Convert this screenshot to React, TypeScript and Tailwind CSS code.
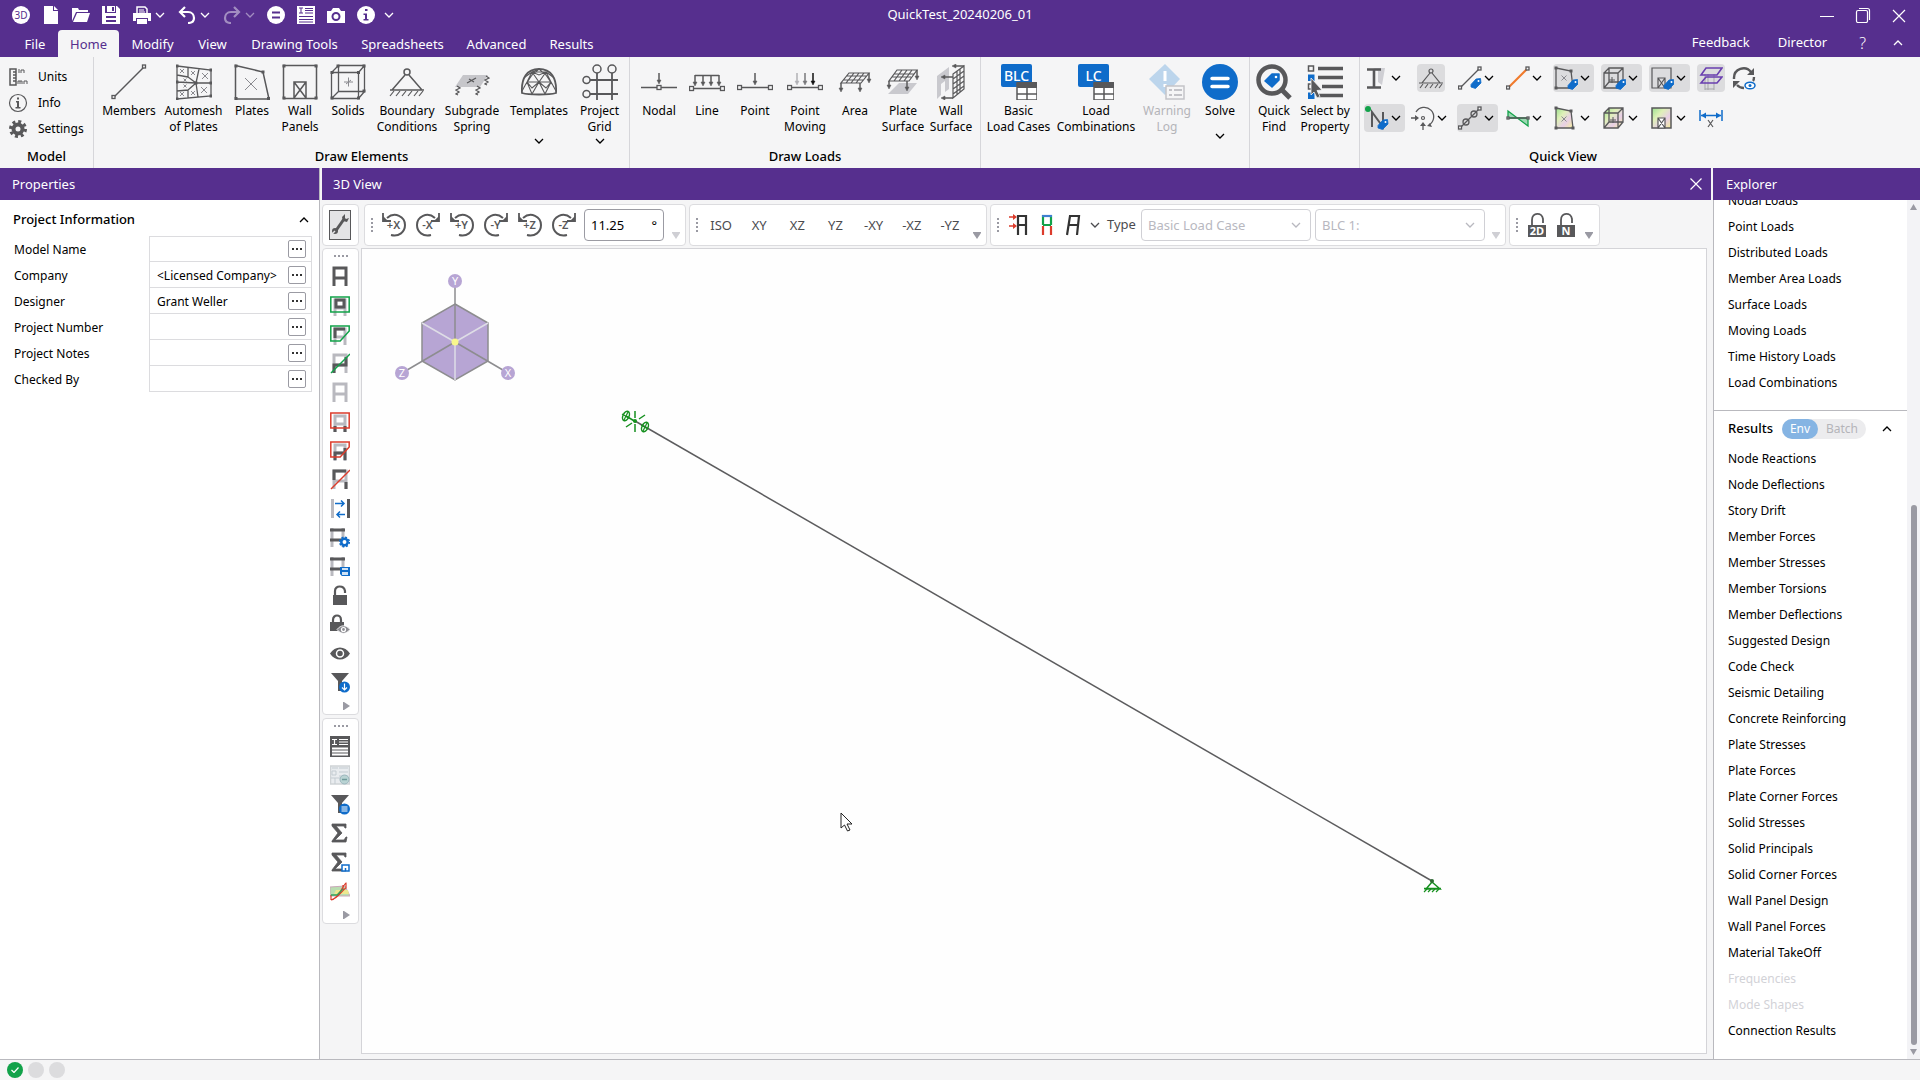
import type { ReactNode } from "react";
import clsx from "clsx";

const DARK = "#58585a";
const GRAY = "#b9b9bf";
const BLUE = "#0f6cca";
const GREEN = "#12a24a";
const RED = "#dc3c2c";
const PURPLE = "#562f8e";

type IconProps = { w?: number; h?: number; children: ReactNode; className?: string };

function Svg({ w = 36, h = 36, children, className }: IconProps) {
  return (
    <svg
      width={w}
      height={h}
      viewBox={`0 0 ${w} ${h}`}
      fill="none"
      stroke={DARK}
      strokeWidth="1.5"
      className={clsx("shrink-0", className)}
      aria-hidden="true"
    >
      {children}
    </svg>
  );
}

function Chevron({ up, className }: { up?: boolean; className?: string }) {
  return (
    <svg
      width="10"
      height="6"
      viewBox="0 0 10 6"
      fill="none"
      stroke="currentColor"
      strokeWidth="1.3"
      className={clsx("shrink-0", className)}
      aria-hidden="true"
    >
      <path d={up ? "M1 5 5 1l4 4" : "M1 1l4 4 4-4"} />
    </svg>
  );
}

/* ---------- quick access bar ---------- */

const quickIcons: { label: string; icon: ReactNode; menu?: boolean; off?: boolean }[] = [
  {
    label: "3D",
    icon: (
      <Svg w={18} h={18}>
        <circle cx="9" cy="9" r="9" fill="#fff" stroke="none" />
        <text x="9" y="12.5" fontSize="10" textAnchor="middle" fill={PURPLE} stroke="none">3D</text>
      </Svg>
    ),
  },
  {
    label: "New",
    icon: (
      <Svg w={14} h={18}>
        <path d="M0 0h9v5h5v13H0z" fill="#fff" stroke="none" />
        <path d="M10 0l4 4h-4z" fill="#fff" stroke="none" />
      </Svg>
    ),
  },
  {
    label: "Open",
    icon: (
      <Svg w={18} h={14}>
        <path d="M0 13V0h6l1 2h9v2H4z" fill="#fff" stroke="none" />
        <path d="M5 5h13l-3 9H1z" fill="#fff" stroke="none" />
      </Svg>
    ),
  },
  {
    label: "Save",
    icon: (
      <Svg w={18} h={18}>
        <path d="M0 0h3v7h11V0h1l3 3v15H0z" fill="#fff" stroke="none" />
        <path d="M5 0h8v6H5z" fill="#fff" stroke="none" />
        <path d="M10 1h2v4h-2zM4 10h10v6H4z" fill={PURPLE} stroke="none" />
        <path d="M4 12h10v2H4z" fill="#fff" stroke="none" />
      </Svg>
    ),
  },
  {
    label: "Print",
    menu: true,
    icon: (
      <Svg w={18} h={18}>
        <path d="M4 7V1h8l2 2v4" stroke="#fff" />
        <path d="M6 4h5M6 6h6" stroke="#fff" strokeWidth="1" />
        <path d="M0 7h18v8h-3v-3H3v3H0z" fill="#fff" stroke="none" />
        <path d="M4 13h10v5H4z" fill="#fff" stroke="none" />
      </Svg>
    ),
  },
  {
    label: "Undo",
    menu: true,
    icon: (
      <Svg w={18} h={18}>
        <path d="M2 6h8c4 0 6 3 6 6 0 3-2 5-6 5" stroke="#fff" strokeWidth="2.2" />
        <path d="M7 1 2 6l5 5" stroke="#fff" strokeWidth="2.2" />
      </Svg>
    ),
  },
  {
    label: "Redo",
    menu: true,
    off: true,
    icon: (
      <Svg w={18} h={18}>
        <path d="M16 6H8c-4 0-6 3-6 6 0 3 2 5 6 5" stroke="#fff" strokeWidth="2.2" />
        <path d="M11 1l5 5-5 5" stroke="#fff" strokeWidth="2.2" />
      </Svg>
    ),
  },
  {
    label: "Solve",
    icon: (
      <Svg w={18} h={18}>
        <circle cx="9" cy="9" r="9" fill="#fff" stroke="none" />
        <path d="M5 6.5h8M5 11.5h8" stroke={PURPLE} strokeWidth="2" />
      </Svg>
    ),
  },
  {
    label: "Spreadsheet",
    icon: (
      <Svg w={18} h={18}>
        <path d="M0 0h18v18H0z" fill="#fff" stroke="none" />
        <path d="M2 2h4M4 2v5M2 7h4M8 2.5h8M8 4.5h8M8 7h8M2 10.5h14M2 13.5h14M2 16h14" stroke={PURPLE} strokeWidth="1" />
      </Svg>
    ),
  },
  {
    label: "Snapshot",
    icon: (
      <Svg w={18} h={15}>
        <path d="M0 3h4l2-3h6l2 3h4v12H0z" fill="#fff" stroke="none" />
        <circle cx="9" cy="8.5" r="3.5" stroke={PURPLE} strokeWidth="2" />
      </Svg>
    ),
  },
  {
    label: "Information",
    icon: (
      <Svg w={18} h={18}>
        <circle cx="9" cy="9" r="9" fill="#fff" stroke="none" />
        <path d="M8 3h2.500v2H8zM6.500 7.500H10V13h1.500v1.500h-5V13H8V9H6.500z" fill={PURPLE} stroke="none" />
      </Svg>
    ),
  },
];

function TitleBar() {
  return (
    <div className="grid h-[30px] grid-cols-[1fr_auto_1fr] items-center">
      <div className="flex pl-1.5">
        {quickIcons.map((q) => (
          <button
            key={q.label}
            aria-label={q.label}
            disabled={q.off}
            className={clsx(
              "flex h-7 items-center",
              q.menu ? "w-[45px] gap-1 pl-[7px]" : "w-[30px] justify-center",
              q.off && "opacity-45"
            )}
          >
            {q.icon}
            {q.menu && <Chevron />}
          </button>
        ))}
        <button aria-label="Customize" className="flex h-7 w-4 items-center justify-center">
          <Chevron />
        </button>
      </div>
      <h1 className="text-[13px]">QuickTest_20240206_01</h1>
      <div className="flex items-center justify-end gap-[21px] pr-3.5">
        <button aria-label="Minimize">
          <Svg w={15} h={16}><path d="M1 9.500h14" stroke="#fff" strokeWidth="1" /></Svg>
        </button>
        <button aria-label="Restore">
          <Svg w={16} h={16}>
            <rect x="1.500" y="3.500" width="11" height="12" rx="1.500" stroke="#fff" strokeWidth="1.200" />
            <path d="M4 1.500h8.500a2 2 0 0 1 2 2V13" stroke="#fff" strokeWidth="1.200" />
          </Svg>
        </button>
        <button aria-label="Close">
          <Svg w={14} h={16}><path d="M1 3l12 12M13 3L1 15" stroke="#fff" strokeWidth="1.200" /></Svg>
        </button>
      </div>
    </div>
  );
}

const tabs = [
  { name: "File", width: "w-[46px]" },
  { name: "Home", width: "w-[61px]" },
  { name: "Modify", width: "w-[67px]" },
  { name: "View", width: "w-[53px]" },
  { name: "Drawing Tools", width: "w-[111px]" },
  { name: "Spreadsheets", width: "w-[105px]" },
  { name: "Advanced", width: "w-[83px]" },
  { name: "Results", width: "w-[67px]" },
];

function TabBar() {
  return (
    <nav className="flex h-[27px] items-end pl-3 text-[13px]">
      {tabs.map((t) => (
        <button
          key={t.name}
          className={clsx(
            "h-[27px] rounded-t pt-0.5 whitespace-nowrap",
            t.width,
            t.name === "Home" && "bg-[#f5f5f6] text-[#562f8e]"
          )}
        >
          {t.name}
        </button>
      ))}
      <div className="ml-auto flex h-7 items-center gap-7 pr-3.5">
        <button>Feedback</button>
        <button>Director</button>
        <div className="flex items-center gap-6 pl-1">
          <button aria-label="Help" className="text-base font-light">?</button>
          <button aria-label="Collapse ribbon" className="w-4"><Chevron up className="mx-auto" /></button>
        </div>
      </div>
    </nav>
  );
}

/* ---------- ribbon drawings ---------- */

const tag = (x: number, y: number) => (
  <g transform={`translate(${x} ${y})`}>
    <path d="M0 6.500 5 1l4.500-.5L10 5 4.500 10.500 0 9z" fill={BLUE} stroke={BLUE} strokeWidth=".8" strokeLinejoin="round" />
    <circle cx="7.500" cy="3" r="1" fill="#fff" stroke="none" />
  </g>
);

const nodeBox = (x: number, y: number, s = 4) => (
  <rect key={`${x}-${y}`} x={x - s / 2} y={y - s / 2} width={s} height={s} fill="#f5f5f6" strokeWidth="1.300" />
);

const dot = (x: number, y: number) => (
  <rect key={`${x}-${y}`} x={x - 1.5} y={y - 1.5} width="3" height="3" fill={DARK} stroke="none" />
);

const arrowDown = (x: number, y1: number, y2: number, color = DARK) => (
  <g key={x} stroke={color} fill={color}>
    <path d={`M${x} ${y1}V${y2 - 2}`} />
    <path d={`M${x - 2} ${y2 - 4}h4l-2 4z`} strokeWidth=".5" />
  </g>
);

const cross = (x: number, y: number, r: number) => (
  <path key={`${x}-${y}`} d={`M${x - r} ${y - r}l${2 * r} ${2 * r}M${x + r} ${y - r}l${-2 * r} ${2 * r}`} stroke="#8a8a8f" strokeWidth="1" />
);

const membersIcon = (
  <Svg>
    <path d="M3 33 33 3" />
    {nodeBox(2.5, 33, 3)}
    {nodeBox(33, 2.5, 3)}
  </Svg>
);

const meshIcon = (
  <Svg>
    <path d="M1 2l34 4v26L1 35zM1 18l19 1h15M20 19 23 5M20 19l2 14M20 19 12 13V3M20 19l-8 7v8M1 11l11 2M1 27l11-1" strokeWidth="1.300" />
    {[[1, 2], [35, 6], [35, 32], [1, 35], [1, 18], [20, 19], [35, 19]].map(([x, y]) => dot(x, y))}
    {[[6, 7, 2], [17, 9, 2], [29, 12, 3], [9, 16, 1.5], [9, 22, 1.5], [6, 30, 2], [17, 29, 2], [28, 26, 3]].map(([x, y, r]) => cross(x, y, r))}
  </Svg>
);

const platesIcon = (
  <Svg>
    <path d="M1.500 1.500 29 8l6 27H1.500z" />
    {dot(2, 2)}{dot(29, 8)}{dot(34.5, 34.5)}{dot(2, 34.5)}
    {cross(17, 20, 6)}
  </Svg>
);

const wallIcon = (
  <Svg>
    <path d="M1.500 1.500h33v33h-33zM12 34V18h12v16M12 18l12 16M24 18 12 34" />
    {dot(2, 2)}{dot(34, 2)}{dot(34, 34)}{dot(2, 34)}
  </Svg>
);

const solidsIcon = (
  <Svg>
    <path d="M1.500 8.500h27v26h-27zM8.500 1.500h26v26h-26zM1.500 8.500l7-7M28.500 8.500l6-7M28.500 34.500l6-7M1.500 34.500l7-7" strokeWidth="1.300" />
    {dot(2, 8.5)}{dot(28.5, 8.5)}{dot(28.5, 34)}{dot(2, 34)}{dot(8, 2)}{dot(34, 2)}{dot(34, 27)}
    <path d="M14 18h9M18.500 13.500v9M16 20l5-4" stroke="#8a8a8f" strokeWidth="1" />
  </Svg>
);

const boundaryIcon = (
  <Svg>
    <path d="M16 11 3 26h30L20 11M1 26h34" />
    <circle cx="18" cy="8" r="3" />
    <path d="M5 27l-4 5M11 27l-4 5M17 27l-4 5M23 27l-4 5M29 27l-4 5M34 27l-4 5" strokeWidth="1.200" />
  </Svg>
);

const subgradeIcon = (
  <Svg>
    <path d="M9 11h25l-8 12H1z" fill="#c6c6ca" stroke="none" />
    <path d="M13 19l9-5M15 15l5 3" strokeWidth="1.300" />
    <path d="M3 22l3 2-4 2 3 2-3 2 2 1M23 22l3 2-4 2 3 2-3 2 2 1M32 12l3 2-4 2 3 2-3 2 2 1" strokeWidth="1.300" />
  </Svg>
);

const domeIcon = (
  <Svg>
    <path d="M1 29C0 14 6 5 18 5s18 9 17 24c-7 2-27 2-34 0z" strokeWidth="1.800" />
    <path d="M1 27l5-9 5 12 7-12 6 12 6-12 5 9M6 18l5-10 7 10 7-10 5 10M11 8h14M18 5l-7 3 7 3 7-3M6 18h24M4 13l7-5M32 13l-7-5M3 23l8-12 7-6 7 6 8 12M6 18l5 6 7-6 7 6 5-6" strokeWidth="1.100" />
  </Svg>
);

const gridIcon = (
  <Svg>
    <path d="M8 16h28M8 30h28M15 9v27M30 9v27" strokeWidth="1.800" />
    <circle cx="15" cy="5" r="4" />
    <circle cx="30" cy="5" r="4" />
    <circle cx="4.500" cy="16" r="3.500" />
    <circle cx="4.500" cy="30" r="3.500" />
  </Svg>
);

const nodalIcon = (
  <Svg>
    <path d="M0 23.500h36" />
    {arrowDown(18, 9, 20)}
    {nodeBox(18, 23.5)}
  </Svg>
);

const lineIcon = (
  <Svg>
    <path d="M2 24.500h32M6 11.500h24" />
    {[6, 14, 22, 30].map((x) => arrowDown(x, 11, 22))}
    {nodeBox(2.5, 24.5)}{nodeBox(33.5, 24.5)}
  </Svg>
);

const pointIcon = (
  <Svg>
    <path d="M2 23.500h32" />
    {arrowDown(18, 9, 21)}
    {nodeBox(2.5, 23.5)}{nodeBox(33.5, 23.5)}
  </Svg>
);

const movingIcon = (
  <Svg>
    <path d="M2 23.500h32" />
    {arrowDown(10, 9, 21, "#b0b0b5")}
    {arrowDown(18, 9, 21, "#77777a")}
    {arrowDown(26, 9, 21, "#111")}
    {nodeBox(2.5, 23.5)}{nodeBox(33.5, 23.5)}
  </Svg>
);

const areaIcon = (
  <Svg>
    <path d="M12 9h20l-8 10H4zM17 9l-8 10M22 9l-8 10M27 9l-8 10M9 12h20M7 16h19" strokeWidth="1.200" />
    {arrowDown(4, 19, 28)}{arrowDown(23, 19, 28)}{arrowDown(32, 9, 19)}
  </Svg>
);

const plateSurfaceIcon = (
  <Svg>
    <path d="M14 19h18l-9 11H3z" fill="#c9c9ce" stroke="none" />
    <path d="M12 6h20l-8 11H4zM17 6 9 17M22 6l-8 11M27 6l-8 11M9 10h20M7 13h19" strokeWidth="1.200" />
    {arrowDown(4, 17, 25)}{arrowDown(22, 17, 27)}{arrowDown(32, 6, 16)}
  </Svg>
);

const wallSurfaceIcon = (
  <Svg>
    <path d="M4 12 16 3v22l-4 3V17l-4 3v11l-4 4z" fill="#c9c9ce" stroke="none" />
    <path d="M20 10 31 2v23l-11 9zM24 7v24M27 5v23M20 15l11-8M20 20l11-8M20 25l11-8M20 30l11-8" strokeWidth="1.200" />
    <path d="M31 2H22M20 13H11M20 34H11" />
    <path d="M23 0v4l-4-2zM12 11v4l-4-2zM12 32v4l-4-2z" fill={DARK} strokeWidth=".5" />
  </Svg>
);

const tableIcon = (text: string) => (
  <Svg>
    <rect x="0" y="0" width="31" height="23" rx="2" fill={BLUE} stroke="none" />
    <text x="15.500" y="17" fontSize="14" fontWeight="500" textAnchor="middle" fill="#fff" stroke="none">{text}</text>
    <path d="M16 19h20v17H16z" fill="#fff" />
    <path d="M16 18h20v6H16z" fill={DARK} stroke="none" />
    <path d="M16 30h20M26 24v12" />
  </Svg>
);

const warningIcon = (
  <Svg>
    <path d="M16 0 31 15 16 31 0 15z" fill="#bcd5ec" stroke="none" />
    <path d="M16 7v10M16 20v3" stroke="#fff" strokeWidth="3" />
    <rect x="17" y="22" width="18" height="13" fill="#f5f5f6" stroke="#c3c3c8" />
    <path d="M20 26h3M25 26h8M20 31h3M25 31h8" stroke="#c3c3c8" strokeWidth="2" />
  </Svg>
);

const solveIcon = (
  <Svg>
    <circle cx="18" cy="18" r="18" fill={BLUE} stroke="none" />
    <path d="M10 14.500h16M10 22.500h16" stroke="#fff" strokeWidth="3.500" strokeLinecap="round" />
  </Svg>
);

const findIcon = (
  <Svg>
    <circle cx="16" cy="16" r="13.500" strokeWidth="4.500" />
    <path d="M26 26l8 8" strokeWidth="5" />
    <path d="M9 17l7-7h7v6l-7 7z" fill={BLUE} stroke={BLUE} strokeLinejoin="round" />
    <circle cx="20" cy="13" r="1.300" fill="#fff" stroke="none" />
  </Svg>
);

const selectIcon = (
  <Svg>
    <path d="M11 4.500h25M11 13.500h25M15 22.500h21M11 31.500h25" strokeWidth="3.500" />
    <rect x="1.500" y="2" width="5" height="5" />
    <rect x="1" y="10.500" width="6.500" height="6.500" fill={BLUE} stroke="none" />
    <rect x="1.500" y="20" width="5" height="5" />
    <rect x="1" y="28.500" width="6.500" height="6.500" fill={BLUE} stroke="none" />
    <path d="M4 14l11 12-5 .5 3 6-3 1.500-3-6-3 3z" fill={DARK} stroke="#f5f5f6" strokeWidth=".8" />
  </Svg>
);

type Tool = { lines: string[]; icon: ReactNode; width: string; menu?: boolean; off?: boolean };

const elementTools: Tool[] = [
  { lines: ["Members"], icon: membersIcon, width: "w-14" },
  { lines: ["Automesh", "of Plates"], icon: meshIcon, width: "w-[73px]" },
  { lines: ["Plates"], icon: platesIcon, width: "w-11" },
  { lines: ["Wall", "Panels"], icon: wallIcon, width: "w-[52px]" },
  { lines: ["Solids"], icon: solidsIcon, width: "w-11" },
  { lines: ["Boundary", "Conditions"], icon: boundaryIcon, width: "w-[74px]" },
  { lines: ["Subgrade", "Spring"], icon: subgradeIcon, width: "w-14" },
  { lines: ["Templates", ""], icon: domeIcon, width: "w-[78px]", menu: true },
  { lines: ["Project", "Grid"], icon: gridIcon, width: "w-[43px]", menu: true },
];

const loadTools: Tool[] = [
  { lines: ["Nodal"], icon: nodalIcon, width: "w-12" },
  { lines: ["Line"], icon: lineIcon, width: "w-12" },
  { lines: ["Point"], icon: pointIcon, width: "w-12" },
  { lines: ["Point", "Moving"], icon: movingIcon, width: "w-[52px]" },
  { lines: ["Area"], icon: areaIcon, width: "w-12" },
  { lines: ["Plate", "Surface"], icon: plateSurfaceIcon, width: "w-12" },
  { lines: ["Wall", "Surface"], icon: wallSurfaceIcon, width: "w-12" },
];

const solveTools: Tool[] = [
  { lines: ["Basic", "Load Cases"], icon: tableIcon("BLC"), width: "w-[71px]" },
  { lines: ["Load", "Combinations"], icon: tableIcon("LC"), width: "w-[84px]" },
  { lines: ["Warning", "Log"], icon: warningIcon, width: "w-[58px]", off: true },
  { lines: ["Solve"], icon: solveIcon, width: "w-12", menu: true },
];

const findTools: Tool[] = [
  { lines: ["Quick", "Find"], icon: findIcon, width: "w-12" },
  { lines: ["Select by", "Property"], icon: selectIcon, width: "w-[54px]" },
];

function ToolButton({ tool }: { tool: Tool }) {
  return (
    <button
      disabled={tool.off}
      className={clsx(
        "flex h-20 shrink-0 flex-col items-center text-xs whitespace-nowrap",
        tool.width,
        tool.off && "text-[#b4b4b9]"
      )}
    >
      {tool.icon}
      <span className="mt-[3px] leading-4">
        {tool.lines.map((l) => (
          <span key={l} className="block min-h-4">{l}</span>
        ))}
      </span>
      {tool.menu && <Chevron className={tool.lines.length > 1 ? "mt-[3px]" : "mt-3.5"} />}
    </button>
  );
}

function RibbonGroup({ title, children, className, last }: { title?: string; children: ReactNode; className?: string; last?: boolean }) {
  return (
    <section className={clsx("flex shrink-0 flex-col pt-[7px]", !last && "border-r border-[#d6d6da]", className)}>
      <div className="flex h-20">{children}</div>
      {title && <h2 className="pt-0.5 text-center text-[13px] leading-5 font-medium">{title}</h2>}
    </section>
  );
}

/* ---------- quick view toggles ---------- */

const plateShape = "M2 2 17 5l2 17H2z";
const solidShape = "M2 7h14v15H2zM7 2h14v14H7zM2 7l5-5M16 7l5-5M16 22l5-6M2 22l5-6";

const viewToggles: { label: string; icon: ReactNode; on?: boolean; menu?: boolean }[] = [
  {
    label: "Member shape",
    menu: true,
    icon: (
      <Svg w={24} h={24}>
        <path d="M8 2h12l-3 17-4-3V5z" fill="#cfcfd4" stroke="none" />
        <path d="M2 3.500h14M9 3v18M2 21.500h14" strokeWidth="2.600" />
      </Svg>
    ),
  },
  {
    label: "Boundary conditions",
    on: true,
    icon: (
      <Svg w={24} h={24}>
        <path d="M11 7 3 17h18L13 7M0 17h24" strokeWidth="1.200" />
        <circle cx="12" cy="5" r="2" strokeWidth="1.200" />
        <path d="M4 18l-3 4M9 18l-3 4M14 18l-3 4M19 18l-3 4M23 18l-3 4" strokeWidth="1.100" />
      </Svg>
    ),
  },
  {
    label: "Member labels",
    menu: true,
    icon: (
      <Svg w={24} h={24}>
        <path d="M2 22 22 2" strokeWidth="1.200" />
        {nodeBox(2, 21.5, 3)}{nodeBox(21.5, 2.5, 3)}
        {tag(13, 12)}
      </Svg>
    ),
  },
  {
    label: "Member color",
    menu: true,
    icon: (
      <Svg w={24} h={24}>
        <path d="M2 22 22 2" stroke="#f07a2c" strokeWidth="2" />
        {nodeBox(2, 21.5, 3)}{nodeBox(21.5, 2.5, 3)}
      </Svg>
    ),
  },
  {
    label: "Plate labels",
    menu: true,
    on: true,
    icon: (
      <Svg w={24} h={24}>
        <path d={plateShape} strokeWidth="1.300" />
        {dot(2, 2)}{dot(17, 5)}{dot(2, 22)}
        {cross(10, 12, 2.5)}
        {tag(14, 13)}
      </Svg>
    ),
  },
  {
    label: "Solid labels",
    menu: true,
    on: true,
    icon: (
      <Svg w={24} h={24}>
        <path d={solidShape} strokeWidth="1.300" />
        <path d="M7 14h6M10 11v6" strokeWidth="1" />
        {tag(14, 13)}
      </Svg>
    ),
  },
  {
    label: "Wall labels",
    menu: true,
    on: true,
    icon: (
      <Svg w={24} h={24}>
        <path d="M2 2h19v20H2zM8 22V12h7v10M8 12l7 10M15 12 8 22" strokeWidth="1.200" />
        {tag(14, 13)}
      </Svg>
    ),
  },
  {
    label: "Story diaphragms",
    on: true,
    icon: (
      <Svg w={24} h={24}>
        <path d="M6 8v16M9 8v16M15 8v16M6 23h9" stroke="#a5a5aa" strokeWidth="1" />
        <path d="M7 2h16l-5 7H2zM7 11h16l-5 6H2z" stroke="#6a3fb0" strokeWidth="1.600" />
      </Svg>
    ),
  },
  {
    label: "Refresh view",
    icon: (
      <Svg w={24} h={24}>
        <path d="M2 12a9.500 9.500 0 0 1 17-6M22 11c0 2 0 3-1 4M5 19a9.500 9.500 0 0 0 7 3M2 12v1" strokeWidth="2.400" />
        <path d="M22 2v7h-7zM1 22v-7h7z" fill={DARK} stroke="none" />
        <ellipse cx="18" cy="19.500" rx="5" ry="3.300" stroke={BLUE} fill="#fff" />
        <circle cx="18" cy="19.500" r="1.500" fill={BLUE} stroke="none" />
      </Svg>
    ),
  },
  {
    label: "Node labels",
    menu: true,
    on: true,
    icon: (
      <Svg w={24} h={24}>
        <path d="M7 21V6l11 15V6" strokeWidth="2" />
        <circle cx="3" cy="3" r="3" fill={GREEN} stroke="none" />
        {tag(13, 13)}
      </Svg>
    ),
  },
  {
    label: "Loads",
    menu: true,
    icon: (
      <Svg w={24} h={24}>
        <path d="M5 6A9.500 9.500 0 1 1 18 19M0 12h5M12 24v-5" strokeWidth="1.300" />
        <path d="M4 9l4 3-4 3zM9 20l3-4 3 4zM21 21l-5-1 3-3z" fill={DARK} stroke="none" />
        <circle cx="12" cy="12" r="1.500" strokeWidth="1.200" />
      </Svg>
    ),
  },
  {
    label: "Member releases",
    menu: true,
    on: true,
    icon: (
      <Svg w={24} h={24}>
        <path d="M2 22 22 2" strokeWidth="1.200" />
        {nodeBox(2, 21.5, 3)}{nodeBox(21.5, 2.5, 3)}
        <circle cx="8" cy="16" r="3" strokeWidth="1.300" />
        <circle cx="16" cy="8" r="3" strokeWidth="1.300" />
      </Svg>
    ),
  },
  {
    label: "Member diagrams",
    menu: true,
    icon: (
      <Svg w={24} h={24}>
        <path d="M2 5v7h20v8L2 5z" fill="#9bd8b2" stroke={GREEN} strokeWidth="1.300" />
        <path d="M2 12h20" />
        {nodeBox(2, 12, 2)}{nodeBox(22, 12, 2)}
      </Svg>
    ),
  },
  {
    label: "Plate contours",
    menu: true,
    icon: (
      <Svg w={24} h={24}>
        <path d={plateShape} strokeWidth="1.300" fill="url(#contour)" />
        {dot(2, 2)}{dot(17, 5)}{dot(19, 22)}{dot(2, 22)}
        {cross(10, 13, 2.5)}
      </Svg>
    ),
  },
  {
    label: "Solid contours",
    menu: true,
    icon: (
      <Svg w={24} h={24}>
        <path d="M2 7l5-5h14v14l-5 6H2z" fill="url(#contour)" stroke="none" />
        <path d={solidShape} strokeWidth="1.300" />
        <path d="M8 14h6M11 11v6" strokeWidth="1" />
      </Svg>
    ),
  },
  {
    label: "Wall contours",
    menu: true,
    icon: (
      <Svg w={24} h={24}>
        <path d="M2 2h19v20H2z" fill="url(#contour)" />
        <path d="M8 22V12h7v10zM8 12l7 10M15 12 8 22" fill="#fff" strokeWidth="1.200" />
      </Svg>
    ),
  },
  {
    label: "Dimensions",
    icon: (
      <Svg w={24} h={24}>
        <path d="M1 4v11M23 4v11M2 9.500h20" stroke={BLUE} />
        <path d="M7 6.500v6l-5-3zM17 6.500v6l5-3z" fill={BLUE} stroke="none" />
        <path d="M9 14l5 7M14 14l-5 7" strokeWidth="1.200" />
      </Svg>
    ),
  },
];

function QuickView() {
  return (
    <div className="grid h-20 grid-cols-[41px_38px_41px_41px_41px_41px_41px_28px_24px] content-start gap-x-[7px] gap-y-3 pl-1">
      {viewToggles.map((v) => (
        <button
          key={v.label}
          aria-label={v.label}
          aria-pressed={!!v.on}
          className={clsx(
            "flex h-7 items-center justify-center gap-0.5 justify-self-center rounded-sm",
            v.menu ? "w-full pr-1" : "w-7",
            v.on && "bg-[#dcdcde]"
          )}
        >
          {v.icon}
          {v.menu && <Chevron />}
        </button>
      ))}
    </div>
  );
}

function Ribbon() {
  return (
    <div className="flex h-[111px] shrink-0 overflow-hidden bg-[#f5f5f6] text-black">
      <RibbonGroup title="Model" className="w-[94px]">
        <div className="flex flex-col pl-2 text-xs">
          <button className="flex h-[26px] items-center gap-2.5">
            <Svg w={20} h={20}>
              <path d="M2 2h6v16H2zM5 5h3M5 8h3M5 11h3M5 14h3" />
              <path d="M11 2v4M13 6V3h3v3M10 17v-3h2v3M12 14h2v3M16 17v-3h3v3" strokeWidth="1" />
            </Svg>
            Units
          </button>
          <button className="flex h-[26px] items-center gap-2.5">
            <Svg w={20} h={20}>
              <circle cx="10" cy="10" r="8.500" strokeWidth="1.200" />
              <path d="M9 4.500h2v2H9zM8 8h3v6h1.500v1.500h-5V14H9V9.500H8z" fill={DARK} stroke="none" />
            </Svg>
            Info
          </button>
          <button className="flex h-[26px] items-center gap-2.5">
            <Svg w={20} h={20}>
              <circle cx="10" cy="10" r="4.500" strokeWidth="4" />
              <circle cx="10" cy="10" r="7.500" strokeWidth="3" strokeDasharray="3 2.890" />
            </Svg>
            Settings
          </button>
        </div>
      </RibbonGroup>
      <RibbonGroup title="Draw Elements" className="w-[536px]">
        <div className="flex pl-[7px]">{elementTools.map((t) => <ToolButton key={t.lines.join()} tool={t} />)}</div>
      </RibbonGroup>
      <RibbonGroup title="Draw Loads" className="w-[351px]">
        <div className="flex pl-[5px]">{loadTools.map((t) => <ToolButton key={t.lines.join()} tool={t} />)}</div>
      </RibbonGroup>
      <RibbonGroup className="w-[269px]">
        <div className="flex pl-0.5">{solveTools.map((t) => <ToolButton key={t.lines.join()} tool={t} />)}</div>
      </RibbonGroup>
      <RibbonGroup className="w-[110px]">
        {findTools.map((t) => <ToolButton key={t.lines.join()} tool={t} />)}
      </RibbonGroup>
      <RibbonGroup title="Quick View" className="w-[406px]" last>
        <QuickView />
      </RibbonGroup>
    </div>
  );
}

/* ---------- properties ---------- */

const properties = [
  { id: "model-name", label: "Model Name", value: "" },
  { id: "company", label: "Company", value: "<Licensed Company>" },
  { id: "designer", label: "Designer", value: "Grant Weller" },
  { id: "project-number", label: "Project Number", value: "" },
  { id: "project-notes", label: "Project Notes", value: "" },
  { id: "checked-by", label: "Checked By", value: "" },
];

function PropertiesPanel() {
  return (
    <aside className="mr-0.5 flex w-80 shrink-0 flex-col border-r border-[#b9b9be] bg-white">
      <h2 className="flex h-8 items-center bg-[#562f8e] pt-0.5 pl-3 text-[13px] text-white">Properties</h2>
      <div className="flex h-9 items-center justify-between pt-[3px] pr-2 pl-[13px]">
        <h3 className="text-[13px] font-medium">Project Information</h3>
        <button aria-label="Collapse" className="p-0.5"><Chevron up /></button>
      </div>
      <div className="mr-[7px] text-xs">
        {properties.map((p, i) => (
          <div key={p.id} className="flex h-[26px]">
            <label htmlFor={p.id} className="flex w-[149px] items-center pt-0.5 pl-3.5">{p.label}</label>
            <div className={clsx("flex flex-1 items-center border-x border-b border-[#dcdcdf] pr-[5px]", i === 0 && "border-t")}>
              <input id={p.id} defaultValue={p.value} className="w-0 flex-1 bg-transparent pt-0.5 pl-[7px] outline-none" />
              <button aria-label={`Edit ${p.label}`} className="flex size-[18px] items-center justify-center gap-0.5 rounded-xs border border-[#9b9ba3]">
                <i className="size-0.5 bg-[#333]" />
                <i className="size-0.5 bg-[#333]" />
                <i className="size-0.5 bg-[#333]" />
              </button>
            </div>
          </div>
        ))}
      </div>
    </aside>
  );
}

/* ---------- 3D view toolbar ---------- */

const rotations = ["+X", "-X", "+Y", "-Y", "+Z", "-Z"];

function RotateIcon({ axis }: { axis: string }) {
  const flip = axis.startsWith("-");
  return (
    <Svg w={24} h={26}>
      <g transform={flip ? "matrix(-1 0 0 1 24 0)" : undefined}>
        <path d="M5 6c8-7 18-1 18 7 0 7-6 12-14 10" strokeWidth="2" />
        <path d="M1 1v8h8" strokeWidth="1.800" />
        <path d="M1 9V4l5 5z" fill={DARK} stroke="none" />
      </g>
      <text x="11.500" y="17" fontSize="11" fontWeight="600" textAnchor="middle" fill={DARK} stroke="none">{axis}</text>
    </Svg>
  );
}

function Grip({ across }: { across?: boolean }) {
  return (
    <div className={clsx("flex gap-0.5", across ? "justify-center" : "flex-col")}>
      {[0, 1, 2, 3].map((n) => <i key={n} className="size-0.5 bg-[#9a9aa3]" />)}
    </div>
  );
}

function More({ faint }: { faint?: boolean }) {
  return (
    <button aria-label="More" className="mt-5 block">
      <svg width="8" height="7" viewBox="0 0 8 7" fill={faint ? "#cfcfd4" : "#9a9aa3"} aria-hidden="true">
        <path d="M0 0h8v1L4 7 0 1z" />
      </svg>
    </button>
  );
}

function Strip({ children, className }: { children: ReactNode; className?: string }) {
  return <div className={clsx("flex h-[42px] items-center rounded-sm border border-[#dcdcdf] bg-white", className)}>{children}</div>;
}

const planes = ["ISO", "XY", "XZ", "YZ", "-XY", "-XZ", "-YZ"];

function DisabledSelect({ id, label, value, width }: { id: string; label: string; value: string; width: string }) {
  return (
    <div className={clsx("relative", width)}>
      <select id={id} aria-label={label} disabled className="h-8 w-full appearance-none rounded-sm border border-[#d0d0d5] bg-white pt-px pl-1.5 text-[13px] text-[#b8b8bf] opacity-100">
        <option>{value}</option>
      </select>
      <Chevron className="pointer-events-none absolute top-[13px] right-2.5 text-[#b8b8bf]" />
    </div>
  );
}

function LockIcon({ text }: { text: string }) {
  return (
    <Svg w={18} h={26}>
      <path d="M4 13V8c0-8 10-8 11-1v4" strokeWidth="1.800" />
      <path d="M0 13h18v12H0z" fill={DARK} stroke="none" />
      <text x="9" y="23" fontSize="11" fontWeight="700" textAnchor="middle" fill="#fff" stroke="none">{text}</text>
    </Svg>
  );
}

function ViewToolbar() {
  return (
    <div className="flex items-center gap-[3px] pt-1">
      <Strip className="mr-0.5 w-[37px] justify-center pr-0.5">
        <button aria-label="Tools" className="border border-[#58585a] bg-[#e4e4e6] pb-0.5">
          <Svg w={20} h={26}>
            <path d="M5 21 14 8" strokeWidth="3" />
            <path d="M15 3l-3 3 1 4 4 1 2-4-3 1-1-1z" fill={DARK} stroke="none" />
            <circle cx="5" cy="20" r="3" fill={DARK} stroke="none" />
            <path d="M2 23l3-3" stroke="#e4e4e6" strokeWidth="1.500" />
          </Svg>
        </button>
      </Strip>
      <Strip className="w-[322px] pl-1.5">
        <Grip />
        <div className="ml-[9px] flex gap-2.5">
          {rotations.map((r) => (
            <button key={r} aria-label={`Rotate ${r}`}><RotateIcon axis={r} /></button>
          ))}
        </div>
        <div className="ml-2 flex h-8 w-20 items-center rounded-sm border border-[#9b9ba3] px-1.5 pt-px text-[13px]">
          <input aria-label="Rotation angle" defaultValue="11.25" className="w-0 flex-1 outline-none" />
          <span>°</span>
        </div>
        <div className="ml-2"><More faint /></div>
      </Strip>
      <Strip className="w-[298px] pl-1.5">
        <Grip />
        <div className="ml-1 grid flex-1 grid-cols-7 pt-px text-[13px] text-[#4b4b4f]">
          {planes.map((p) => <button key={p}>{p}</button>)}
        </div>
        <div className="ml-1 pr-[5px]"><More /></div>
      </Strip>
      <Strip className="w-[516px] pl-1.5 text-[13px] text-[#4b4b4f]">
        <Grip />
        <button aria-label="Show loads" className="ml-2.5">
          <Svg w={19} h={22}>
            <path d="M9 21V2h8v19M9 11h8" stroke="#333" strokeWidth="2.200" />
            <path d="M0 3h6M0 12h6" stroke={RED} />
            <path d="M4 0l4 3-4 3zM4 9l4 3-4 3z" fill={RED} stroke="none" />
          </Svg>
        </button>
        <button aria-label="Color by group" className="ml-[13px]">
          <Svg w={12} h={22}>
            <path d="M2 11V2h8v9M2 11h8" stroke={GREEN} strokeWidth="2.200" />
            <path d="M1 2h10" stroke="#3f7fd0" strokeWidth="2.200" />
            <path d="M2 12v9M10 12v9" stroke={RED} strokeWidth="2.200" />
          </Svg>
        </button>
        <button aria-label="Deflected shape" className="ml-[13px] flex items-center gap-2">
          <Svg w={16} h={22}>
            <path d="M1 21 4 2h9l-2 19M3 11h9" stroke="#333" strokeWidth="2.200" />
          </Svg>
          <Chevron />
        </button>
        <label htmlFor="load-type" className="ml-[7px] w-[34px]">Type</label>
        <DisabledSelect id="load-type" label="Type" value="Basic Load Case" width="w-[170px]" />
        <div className="ml-1"><DisabledSelect id="load-case" label="Load case" value="BLC 1:" width="w-[170px]" /></div>
        <div className="ml-[7px]"><More faint /></div>
      </Strip>
      <Strip className="w-[91px] pl-1.5">
        <Grip />
        <button aria-label="Lock 2D" className="ml-2.5"><LockIcon text="2D" /></button>
        <button aria-label="Lock nodes" className="ml-[11px]"><LockIcon text="N" /></button>
        <div className="ml-2.5"><More /></div>
      </Strip>
    </div>
  );
}

/* ---------- selection tools ---------- */

const frame = (color: string) => <path d="M4 20V2h12v18M4 12h12" stroke={color} strokeWidth="3" />;
const smallFrame = <path d="M5 21V5h10v16M5 13h10" stroke={GRAY} strokeWidth="3" />;
const funnel = <path d="M1 1h18l-7 8v10H8V9z" fill={DARK} stroke="none" />;

const selectionTools: { label: string; art: ReactNode }[] = [
  { label: "Select all", art: frame(DARK) },
  {
    label: "Box select",
    art: <>{smallFrame}<path d="M6 5h8v7H6z" strokeWidth="3" /><path d="M.8 2h18.400v15H.8z" stroke={GREEN} /></>,
  },
  {
    label: "Polygon select",
    art: <>{smallFrame}<path d="M5 14V5h10" strokeWidth="3" /><path d="M.8 2h18.400v5l-9 10H.8z" stroke={GREEN} /></>,
  },
  {
    label: "Line select",
    art: <>{frame(GRAY)}<path d="M4 20v-8h12V4" strokeWidth="3" /><path d="M1 20 20 1" stroke={GREEN} /></>,
  },
  { label: "Unselect all", art: frame(GRAY) },
  {
    label: "Box unselect",
    art: <>{smallFrame}<path d="M5 15v6M15 15v6" strokeWidth="3" /><path d="M.8 2h18.400v15H.8z" stroke={RED} /></>,
  },
  {
    label: "Polygon unselect",
    art: <>{smallFrame}<path d="M5 20v-7h10M15 8v12" strokeWidth="3" /><path d="M.8 2h18.400v5l-9 10H.8z" stroke={RED} /></>,
  },
  {
    label: "Line unselect",
    art: <>{frame(GRAY)}<path d="M4 11V2h12M16 13v7" strokeWidth="3" /><path d="M1 20 20 1" stroke={RED} /></>,
  },
  {
    label: "Invert selection",
    art: (
      <>
        <path d="M2.500 1v19" stroke={GRAY} strokeWidth="3" />
        <path d="M18.500 1v19" strokeWidth="3" />
        <path d="M5 5.500h9M11 2.500l3 3-3 3M15 16.500H7M10 13.500l-3 3 3 3" stroke={BLUE} />
      </>
    ),
  },
  {
    label: "Criteria selection",
    art: (
      <>
        <path d="M2 1v19M13 1v19" stroke={GRAY} strokeWidth="3" />
        <path d="M0 3h15M0 13h12" strokeWidth="3" />
        <circle cx="14.500" cy="15" r="3.200" stroke={BLUE} strokeWidth="2.500" fill="#fff" />
        <circle cx="14.500" cy="15" r="4.800" stroke={BLUE} strokeWidth="1.500" strokeDasharray="2 1.770" />
      </>
    ),
  },
  {
    label: "Saved selections",
    art: (
      <>
        <path d="M2 1v19M13 1v19" stroke={GRAY} strokeWidth="3" />
        <path d="M0 3h15M0 13h12" strokeWidth="3" />
        <path d="M10 11h10v9H12l-2-2z" fill={BLUE} stroke="none" />
        <path d="M12 12h6v2h-6zM12 16h6v3h-6z" fill="#cfe2f5" stroke="none" />
      </>
    ),
  },
  {
    label: "Unlock",
    art: <><path d="M5 10V6c0-6 9-6 10 0v2" strokeWidth="2.200" /><path d="M3 10h14v10H3z" fill={DARK} stroke="none" /></>,
  },
  {
    label: "Lock unselected",
    art: (
      <>
        <path d="M3 9V6c0-6 8-6 8 0v3" strokeWidth="2.200" />
        <path d="M0 8h14v9H0z" fill={DARK} stroke="none" />
        <path d="M7 15.500c4-5 9-5 13 0-4 5-9 5-13 0z" fill="#8d8d92" stroke="#fff" strokeWidth=".8" />
        <circle cx="13.500" cy="15.500" r="2" fill="#8d8d92" stroke="#fff" strokeWidth="1.200" />
      </>
    ),
  },
  {
    label: "Show selected",
    art: (
      <>
        <path d="M0 10.500c5-8 15-8 20 0-5 8-15 8-20 0z" fill={DARK} stroke="none" />
        <circle cx="10" cy="10.500" r="3.500" stroke="#fff" strokeWidth="1.500" />
      </>
    ),
  },
  {
    label: "Filter",
    art: (
      <>
        {funnel}
        <circle cx="14.500" cy="15" r="5.500" fill={BLUE} stroke="none" />
        <path d="M14.500 11.500v6M12 15.500l2.500 2.500 2.500-2.500" stroke="#fff" strokeWidth="1.200" />
      </>
    ),
  },
];

const sigma = (
  <path d="M2 1h14v4h-1l-1-2H6l6 7-7 7h9l2-3h1l-1 5H2v-1l6-8-6-7z" fill={DARK} stroke={DARK} strokeWidth=".8" />
);

const resultTools: { label: string; art: ReactNode }[] = [
  {
    label: "Member detail",
    art: (
      <>
        <path d="M0 0h20v21H0z" fill={DARK} stroke="none" />
        <path d="M2 3.500h5M4.500 3.500v5M2 8.500h5M9 3.500h9M9 6h9M9 8.500h9" stroke="#fff" strokeWidth="1.200" />
        <path d="M2 12.500h16M2 15.500h16M2 18.500h16" stroke="#fff" strokeWidth="1.800" />
      </>
    ),
  },
  {
    label: "Detail report",
    art: (
      <>
        <path d="M.5 1h19v18H.5z" fill="#e9ecef" stroke="#cfd3d6" />
        <path d="M2 3h6M2 6h4v4H2zM9 3h9M9 7h9M9 11h9M1 13h18M5 13v6" stroke="#c3cbd1" strokeWidth="1" />
        <circle cx="14.500" cy="14.500" r="4.500" fill="#b9d3d3" stroke="#9cb6bd" strokeWidth="1" />
        <path d="M12 14.500h5" stroke="#6f9a9a" />
      </>
    ),
  },
  {
    label: "Filter results",
    art: (
      <>
        {funnel}
        <circle cx="14.500" cy="15" r="5.500" fill={BLUE} stroke="none" />
        <path d="M11.500 13h6M11.500 15h6M11.500 17h6" stroke="#fff" strokeWidth="1" />
      </>
    ),
  },
  { label: "Sum", art: sigma },
  {
    label: "Sum selected",
    art: (
      <>
        {sigma}
        <path d="M12 13h7v6h-7z" fill="#fff" stroke={BLUE} />
        <path d="M15.500 19v-3" stroke={BLUE} />
      </>
    ),
  },
  {
    label: "Contour results",
    art: (
      <>
        <path d="M0 6l15-1 5 10H0z" fill="#b9ddb0" stroke="#c9a9b9" strokeWidth="1" />
        <path d="M6 9h12l1 4H4z" fill="#ece98f" stroke="none" />
        <path d="M1 19c8-1 13-17 15-17v5C12 9 8 18 1 19zM1 14v5M13 4v5" stroke={RED} strokeWidth="1.200" />
        <path d="M1 14h6l6-6" stroke="#35a35b" strokeWidth="1.300" />
      </>
    ),
  },
];

function SideTools({ items }: { items: { label: string; art: ReactNode }[] }) {
  return (
    <div className="flex flex-col rounded-sm border border-[#dcdcdf] bg-white">
      <div className="pt-1.5 pb-[5px]"><Grip across /></div>
      {items.map((t) => (
        <button key={t.label} aria-label={t.label} className="flex h-[29px] items-center justify-center pr-px">
          <Svg w={20} h={21}>{t.art}</Svg>
        </button>
      ))}
      <button aria-label="More tools" className="flex h-[17px] items-center justify-end pr-2">
        <svg width="7" height="8" viewBox="0 0 7 8" fill="#9a9aa3" aria-hidden="true"><path d="M0 0h1l6 4-6 4H0z" /></svg>
      </button>
    </div>
  );
}

/* ---------- model canvas ---------- */

function Axis({ x, y, name }: { x: number; y: number; name: string }) {
  return (
    <g>
      <line x1="93" y1="93" x2={x} y2={y} stroke="#8d8d8f" strokeWidth="1.500" />
      <circle cx={x} cy={y} r="7" fill="#b7a5d4" />
      <text x={x} y={y + 4} fontSize="11" textAnchor="middle" fill="#fff">{name}</text>
    </g>
  );
}

function ModelCanvas() {
  return (
    <div className="relative flex-1 overflow-hidden border border-[#d4d4d8] bg-[#fefefe]">
      <svg className="absolute inset-0 size-full" role="img" aria-label="Model view">
        <path d="M93 55l33 19v38l-33 19-33-19V74z" fill="#b7a5d4" stroke="#8d8d8f" strokeWidth="1.500" />
        <Axis x={93} y={32} name="Y" />
        <Axis x={40} y={124} name="Z" />
        <Axis x={146} y={124} name="X" />
        <path d="M93 93v38M93 93 60 74M93 93l33-19" stroke="#dedde6" strokeWidth="1.500" />
        <circle cx="93" cy="93" r="3.500" fill="#f8f78d" />

        <line x1="273" y1="172" x2="1070" y2="632" stroke="#5c5c5e" strokeWidth="1.500" />

        <g stroke="#16901f" strokeWidth="1.500" fill="none">
          <path d="M264 167l10 6M273 162v7M273 175v8M277 170l6-4M270 174l-6 4" />
          <ellipse cx="264" cy="167" rx="3" ry="5" transform="rotate(25 264 167)" />
          <ellipse cx="283" cy="178" rx="3" ry="5" transform="rotate(25 283 178)" />
          <path d="M260 165l7 4M266 163l-4 8M279 176l7 4M285 174l-4 8" strokeWidth="1.200" />
          <path d="M1070 633l-6 7h14zM1062 639.500h17" />
          <path d="M1065 640l-3 3M1069 640l-3 3M1073 640l-3 3M1077 640l-3 3" strokeWidth="1.200" />
        </g>
        <circle cx="273" cy="172" r="2" fill="#16901f" />
        <circle cx="1070" cy="632" r="2" fill="#2a6a30" />

        <path d="M479 564v15l3.500-3 3 6 2.500-1-3-6h5z" fill="#fff" stroke="#222" strokeWidth="1" />
      </svg>
    </div>
  );
}

function ModelView() {
  return (
    <main className="flex min-w-0 flex-1 flex-col bg-[#f5f5f6]">
      <div className="flex h-8 items-center justify-between bg-[#562f8e] pr-2 pl-[11px] text-[13px] text-white">
        <h2 className="pt-0.5">3D View</h2>
        <button aria-label="Close view">
          <Svg w={14} h={14}><path d="M1.500 1.500l11 11M12.500 1.500l-11 11" stroke="#fff" strokeWidth="1.200" /></Svg>
        </button>
      </div>
      <ViewToolbar />
      <div className="flex min-h-0 flex-1 pt-0.5 pr-1 pb-[5px]">
        <div className="mr-0.5 flex w-[37px] shrink-0 flex-col gap-[3px]">
          <SideTools items={selectionTools} />
          <SideTools items={resultTools} />
        </div>
        <ModelCanvas />
      </div>
    </main>
  );
}

/* ---------- explorer ---------- */

const dataItems = [
  "Nodal Loads",
  "Point Loads",
  "Distributed Loads",
  "Member Area Loads",
  "Surface Loads",
  "Moving Loads",
  "Time History Loads",
  "Load Combinations",
];

const resultItems = [
  "Node Reactions",
  "Node Deflections",
  "Story Drift",
  "Member Forces",
  "Member Stresses",
  "Member Torsions",
  "Member Deflections",
  "Suggested Design",
  "Code Check",
  "Seismic Detailing",
  "Concrete Reinforcing",
  "Plate Stresses",
  "Plate Forces",
  "Plate Corner Forces",
  "Solid Stresses",
  "Solid Principals",
  "Solid Corner Forces",
  "Wall Panel Design",
  "Wall Panel Forces",
  "Material TakeOff",
  "Frequencies",
  "Mode Shapes",
  "Connection Results",
];

const unavailable = ["Frequencies", "Mode Shapes"];

function ExplorerList({ items }: { items: string[] }) {
  return (
    <ul className="text-xs">
      {items.map((name) => (
        <li key={name} className="h-[26px]">
          <button disabled={unavailable.includes(name)} className="h-full pl-3.5 disabled:text-[#d2d2d7]">{name}</button>
        </li>
      ))}
    </ul>
  );
}

function Explorer() {
  return (
    <aside className="ml-0.5 flex w-[207px] shrink-0 flex-col bg-white">
      <h2 className="flex h-8 shrink-0 items-center bg-[#562f8e] pt-0.5 pl-[13px] text-[13px] text-white">Explorer</h2>
      <div className="flex min-h-0 flex-1 border-l border-[#b9b9be]">
        <div className="flex-1 overflow-hidden">
          <div className="-mt-3 border-b border-[#b9b9be] pb-3.5">
            <ExplorerList items={dataItems} />
          </div>
          <div className="flex h-[35px] items-center pl-3.5">
            <h3 className="w-[54px] pt-px text-[13px] font-medium">Results</h3>
            <div className="flex h-5 rounded-full bg-[#ececee] text-xs">
              <button disabled className="w-9 rounded-full bg-[#85b4e3] text-white">Env</button>
              <button disabled className="w-12 text-[#b4b4b9]">Batch</button>
            </div>
            <button aria-label="Collapse results" className="ml-auto pr-[15px]"><Chevron up /></button>
          </div>
          <ExplorerList items={resultItems} />
        </div>
        <div className="flex w-[13px] flex-col items-center bg-[#f3f3f6] py-1">
          <svg width="7" height="6" viewBox="0 0 7 6" fill="#9a9aa3" aria-hidden="true"><path d="M3.500 0 7 6H0z" /></svg>
          <div className="flex w-1.5 flex-1 flex-col justify-end py-1">
            <div className="h-[65%] rounded-full bg-[#9a9aa3]" />
          </div>
          <svg width="7" height="6" viewBox="0 0 7 6" fill="#9a9aa3" aria-hidden="true"><path d="M3.500 6 7 0H0z" /></svg>
        </div>
      </div>
    </aside>
  );
}

function StatusBar() {
  return (
    <footer className="flex h-[21px] shrink-0 items-center gap-[5px] border-t border-[#b9b9be] bg-[#f5f5f6] pl-[7px]">
      <span className="flex size-4 items-center justify-center rounded-full bg-[#12a24a]">
        <Svg w={8} h={6}><path d="M.5 3l2.500 2.500L7.500.5" stroke="#fff" strokeWidth="1.200" /></Svg>
      </span>
      <span className="size-4 rounded-full bg-[#dcdcde]" />
      <span className="size-4 rounded-full bg-[#dcdcde]" />
    </footer>
  );
}

export default function App() {
  return (
    <div className="flex h-screen flex-col overflow-hidden bg-[#f5f5f6] font-['Noto_Sans','Open_Sans',sans-serif] text-black">
      <svg width="0" height="0" className="absolute" aria-hidden="true">
        <defs>
          <linearGradient id="contour" x1="0" y1="0" x2="1" y2="1">
            <stop offset="0" stopColor="#9be08f" />
            <stop offset=".35" stopColor="#dff0b8" />
            <stop offset=".65" stopColor="#e8cfe6" />
            <stop offset="1" stopColor="#f5ef9a" />
          </linearGradient>
        </defs>
      </svg>
      <header className="shrink-0 bg-[#562f8e] text-white">
        <TitleBar />
        <TabBar />
      </header>
      <Ribbon />
      <div className="flex min-h-0 flex-1">
        <PropertiesPanel />
        <ModelView />
        <Explorer />
      </div>
      <StatusBar />
    </div>
  );
}
